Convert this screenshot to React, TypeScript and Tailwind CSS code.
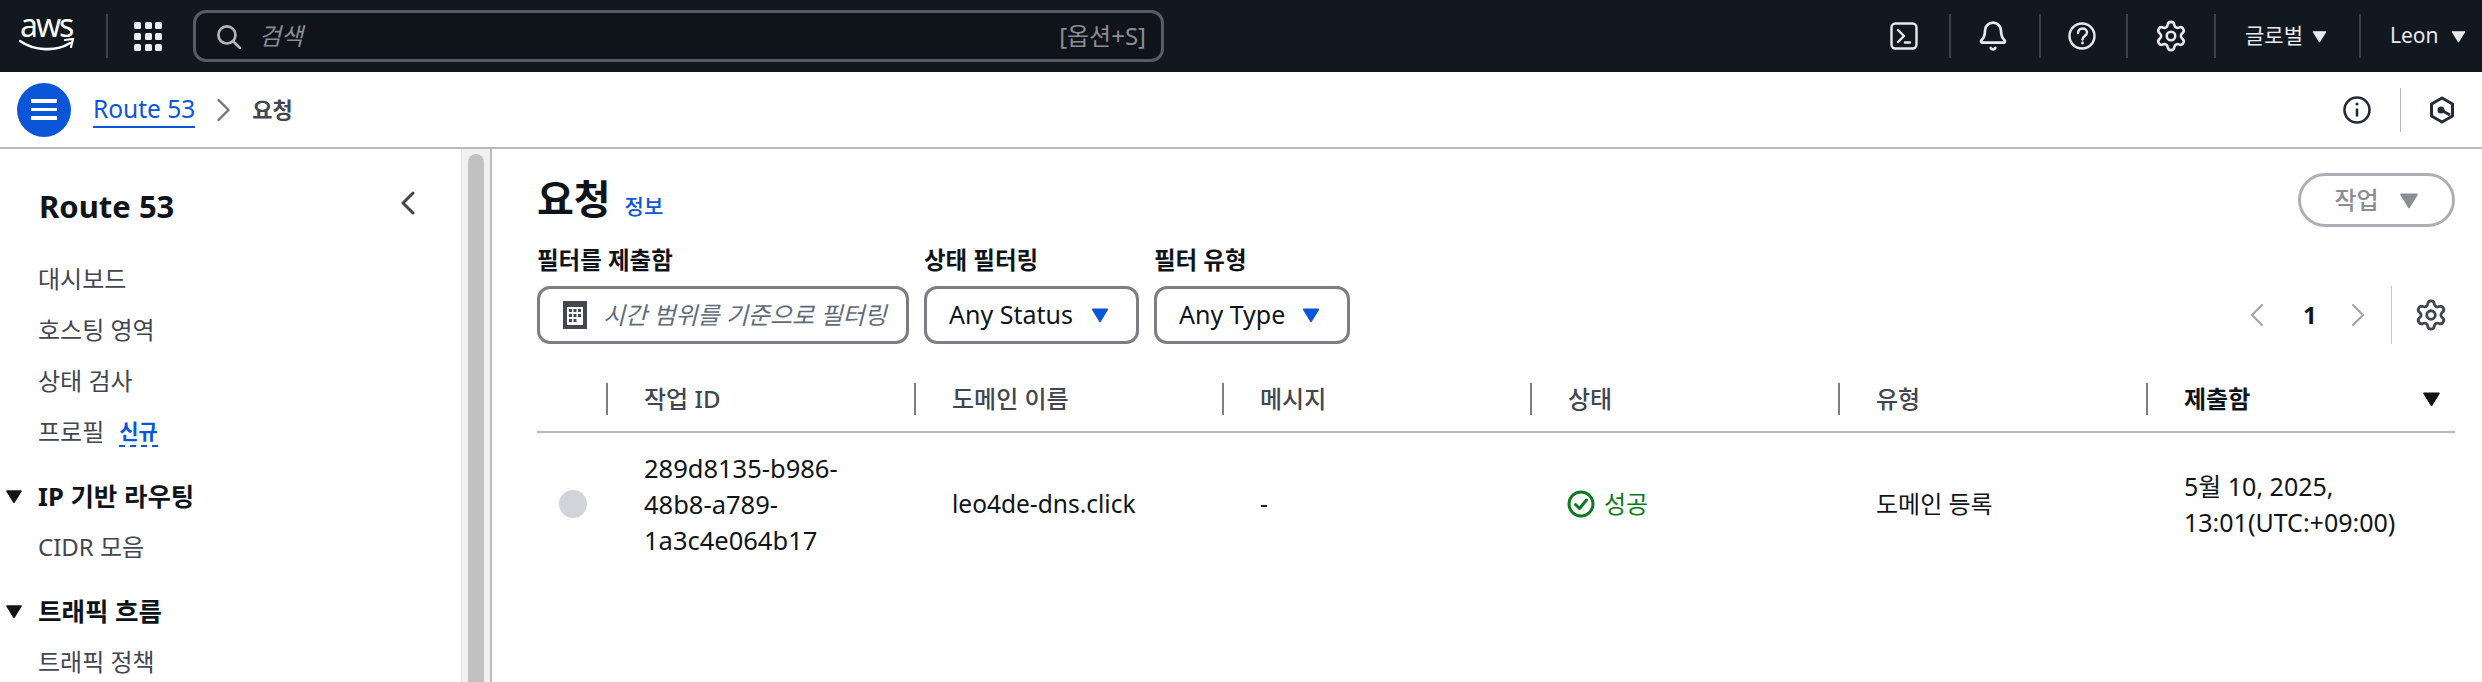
import { Settings, Bell } from "lucide-react";

const Caret = ({ className }: { className: string }) => (
  <svg viewBox="0 0 16 14" className={className}>
    <path d="M1.5 2h13L8 12.5z" fill="currentColor" stroke="currentColor" strokeWidth="1.5" strokeLinejoin="round" />
  </svg>
);

const Chev = ({ dir, className, width = 2.6 }: { dir: "left" | "right"; className: string; width?: number }) => (
  <svg viewBox="0 0 14 24" className={className} fill="none" stroke="currentColor" strokeWidth={width} strokeLinecap="round" strokeLinejoin="round">
    <path d={dir === "right" ? "M2 2l10 10-10 10" : "M12 2L2 12l10 10"} />
  </svg>
);

const Sep = () => <div className="w-[2px] h-[44px] bg-[#3a414c] shrink-0" />;

function TopBar() {
  return (
    <header className="h-[72px] bg-[#121820] flex items-center text-[#e9e9ee] shrink-0">
      <div className="w-[106px] shrink-0 pl-[20px] relative h-full">
        <div className="text-[32px] leading-[32px] pt-[9px] tracking-[-2px] text-white">aws</div>
        <svg viewBox="0 0 56 14" className="absolute left-[19px] top-[38px] w-[56px] h-[14px]">
          <path d="M1 3c14 10 36 11 50 2" fill="none" stroke="#fff" strokeWidth="2.6" strokeLinecap="round" />
          <path d="M46 2l8-1-2 8" fill="none" stroke="#fff" strokeWidth="2.2" strokeLinecap="round" />
        </svg>
      </div>
      <Sep />
      <div className="w-[28px] ml-[26px] grid grid-cols-3 gap-[4px] shrink-0">
        {Array.from({ length: 9 }).map((_, i) => (
          <span key={i} className="w-[7px] h-[7px] rounded-[1.5px] bg-[#eeeef2]" />
        ))}
      </div>
      <div className="ml-[31px] w-[971px] h-[52px] rounded-[13px] border-[3px] border-[#565b64] bg-[#0f141a] flex items-center pl-[20px] pr-[15px]">
        <svg viewBox="0 0 24 24" className="w-[25px] h-[25px] text-[#b4b4bb] shrink-0" fill="none" stroke="currentColor" strokeWidth="2.6">
          <circle cx="10.5" cy="10.5" r="8.2" />
          <path d="M16.5 16.5l6.5 6.500" strokeLinecap="round" />
        </svg>
        <span className="ml-[18px] italic text-[24px] text-[#8c8c94]">검색</span>
        <span className="ml-auto text-[24px] text-[#8c8c94]">[옵션+S]</span>
      </div>
      <div className="ml-auto flex items-center h-[44px]">
        <svg viewBox="0 0 28 28" className="w-[28px] h-[28px]" fill="none" stroke="currentColor" strokeWidth="2.4">
          <rect x="1.5" y="1.5" width="25" height="25" rx="4" />
          <path d="M8 8l6 6-6 6M15 20.5h5" strokeLinecap="round" strokeLinejoin="round" />
        </svg>
        <div className="w-[2px] h-[44px] bg-[#3a414c] ml-[31px]" />
        <Bell className="w-[32px] h-[32px] ml-[26px]" strokeWidth={2} />
        <div className="w-[2px] h-[44px] bg-[#3a414c] ml-[30px]" />
        <svg viewBox="0 0 28 28" className="w-[28px] h-[28px] ml-[27px]" fill="none" stroke="currentColor" strokeWidth="2.4">
          <circle cx="14" cy="14" r="12.5" />
          <path d="M10 11c0-6 9-6 9-.5 0 3.500-4.500 3.500-4.500 7" strokeLinecap="round" />
          <circle cx="14.500" cy="21" r="1.400" fill="currentColor" stroke="none" />
        </svg>
        <div className="w-[2px] h-[44px] bg-[#3a414c] ml-[30px]" />
        <Settings className="w-[34px] h-[34px] ml-[26px]" strokeWidth={1.8} />
        <div className="w-[2px] h-[44px] bg-[#3a414c] ml-[26px]" />
        <span className="text-[21px] ml-[29px] w-[55px] whitespace-nowrap">글로벌</span>
        <Caret className="w-[15px] h-[13px] ml-[12px]" />
        <div className="w-[2px] h-[44px] bg-[#3a414c] ml-[32px]" />
        <span className="text-[21px] ml-[29px] w-[49px] whitespace-nowrap">Leon</span>
        <Caret className="w-[15px] h-[13px] ml-[12px] mr-[16px]" />
      </div>
    </header>
  );
}

function SubBar() {
  return (
    <div className="h-[77px] border-b-2 border-[#b8b8c0] flex items-center shrink-0 bg-white">
      <button className="ml-[17px] w-[54px] h-[54px] rounded-full bg-[#0b55d8] flex flex-col items-center justify-center gap-[5px]">
        <span className="w-[26px] h-[3.500px] bg-white" />
        <span className="w-[26px] h-[3.500px] bg-white" />
        <span className="w-[26px] h-[3.500px] bg-white" />
      </button>
      <a className="ml-[22px] text-[24.500px] leading-[34px] text-[#0b55d8] border-b-2 border-[#0b55d8]">Route 53</a>
      <Chev dir="right" className="w-[15px] h-[24px] ml-[21px] text-[#6f7680]" width={2.4} />
      <span className="ml-[21px] text-[22px] font-bold text-[#424650]">요청</span>
      <div className="ml-auto flex items-center">
        <svg viewBox="0 0 28 28" className="w-[28px] h-[28px] text-[#232b37]" fill="none" stroke="currentColor" strokeWidth="2.6">
          <circle cx="14" cy="14" r="12.500" />
          <path d="M14 12.500v8" />
          <circle cx="14" cy="8" r="1.600" fill="currentColor" stroke="none" />
        </svg>
        <div className="w-px h-[44px] bg-[#b8b8c0] ml-[29px]" />
        <svg viewBox="0 0 26 28" className="w-[26px] h-[28px] ml-[28px] mr-[27px] text-[#232b37]" fill="none" stroke="currentColor" strokeWidth="3">
          <path d="M13 2l10.500 6v12L13 26 2.500 20V8z" strokeLinejoin="round" />
          <circle cx="12" cy="14" r="3.500" fill="currentColor" stroke="none" />
          <path d="M12 14l9 5" />
        </svg>
      </div>
    </div>
  );
}

function Sidebar() {
  const item = "text-[24px] leading-[30px] text-[#424650] pl-[38px]";
  const group = "flex items-center text-[25.500px] leading-[32px] font-bold text-[#0f141a]";
  return (
    <aside className="w-[461px] shrink-0 bg-white">
      <div className="pl-[39px] pr-[46px] pt-[39px] flex items-center justify-between">
        <span className="text-[31px] leading-[36px] font-bold text-[#0f141a]">Route 53</span>
        <Chev dir="left" className="w-[14px] h-[24px] -mt-[6px] text-[#424650]" width={3} />
      </div>
      <nav className="pt-[40px] flex flex-col">
        <div className={item}>대시보드</div>
        <div className={`${item} mt-[21px]`}>호스팅 영역</div>
        <div className={`${item} mt-[21px]`}>상태 검사</div>
        <div className={`${item} mt-[21px] flex items-center`}>
          프로필
          <span className="ml-[15px] text-[21px] leading-[28px] font-bold text-[#0b55d8] border-b-2 border-dashed border-[#0b55d8]">신규</span>
        </div>
        <div className={`${group} mt-[33px]`}>
          <Caret className="w-[18px] h-[15px] ml-[5px] mr-[15px] text-[#0f141a]" />
          IP 기반 라우팅
        </div>
        <div className={`${item} mt-[20px]`}>CIDR 모음</div>
        <div className={`${group} mt-[33px]`}>
          <Caret className="w-[18px] h-[15px] ml-[5px] mr-[15px] text-[#0f141a]" />
          트래픽 흐름
        </div>
        <div className={`${item} mt-[20px]`}>트래픽 정책</div>
      </nav>
    </aside>
  );
}

function Scrollbar() {
  return (
    <div className="w-[31px] shrink-0 bg-[#f1f1f1] border-l border-[#e4e4e4] border-r-2 border-r-[#b8b8c0] px-[6px] pt-[5px]">
      <div className="w-[16px] h-[600px] rounded-full bg-[#c1c1c1]" />
    </div>
  );
}

function SelectBox({ label, width }: { label: string; width: string }) {
  return (
    <div className={`${width} h-[58px] rounded-[13px] border-[3px] border-[#7d7d86] flex items-center justify-between pl-[22px] pr-[27px] text-[25px] text-[#0f141a]`}>
      {label}
      <Caret className="w-[18px] h-[16px] text-[#0b55d8]" />
    </div>
  );
}

function FilterLabel({ children }: { children: string }) {
  return <div className="text-[23.500px] leading-[30px] font-bold text-[#0f141a] mb-[11px]">{children}</div>;
}

const columns = ["작업 ID", "도메인 이름", "메시지", "상태", "유형"];

function Table() {
  return (
    <div className="mt-[39px]">
      <div className="grid grid-cols-[69px_308px_308px_308px_308px_308px_310px] items-start border-b-2 border-[#b8b8c0] pb-[16px]">
        <div />
        {columns.map((c) => (
          <div key={c} className="border-l-2 border-[#7d7d86] h-[32px] pl-[36px] text-[24px] leading-[32px] font-medium text-[#424650]">{c}</div>
        ))}
        <div className="border-l-2 border-[#7d7d86] h-[32px] pl-[36px] pr-[15px] flex items-center justify-between text-[24px] leading-[32px] font-bold text-[#0f141a]">
          제출함
          <Caret className="w-[19px] h-[16px] text-[#0f141a]" />
        </div>
      </div>
      <div className="grid grid-cols-[69px_308px_308px_308px_308px_308px_310px] items-center text-[24.500px] leading-[36px] text-[#0f141a] pt-[17px]">
        <div className="pl-[22px]">
          <div className="w-[28px] h-[28px] rounded-full bg-[#d1d5db]" />
        </div>
        <div className="pl-[38px] text-[25.500px] whitespace-nowrap">
          289d8135-b986-
          <br />
          48b8-a789-
          <br />
          1a3c4e064b17
        </div>
        <div className="pl-[38px]">leo4de-dns.click</div>
        <div className="pl-[38px]">-</div>
        <div className="pl-[37px] flex items-center text-[#0a7a20] text-[24px]">
          <svg viewBox="0 0 28 28" className="w-[28px] h-[28px] mr-[9px]" fill="none" stroke="currentColor" strokeWidth="3">
            <circle cx="14" cy="14" r="12" />
            <path d="M8.500 14.500l4 4 7-8.500" strokeLinecap="round" strokeLinejoin="round" />
          </svg>
          성공
        </div>
        <div className="pl-[38px] text-[24px]">도메인 등록</div>
        <div className="pl-[38px] whitespace-nowrap text-[25px]">
          5월 10, 2025,
          <br />
          13:01(UTC:+09:00)
        </div>
      </div>
    </div>
  );
}

function Main() {
  return (
    <main className="flex-1 min-w-0 pl-[45px] pr-[27px] bg-white">
      <div className="flex justify-between pt-[24px] h-[96px]">
        <div className="flex items-baseline">
          <h1 className="text-[40px] leading-[52px] font-bold text-[#0f141a]">요청</h1>
          <a className="ml-[14px] text-[21px] text-[#0b55d8] font-medium">정보</a>
        </div>
        <button className="w-[157px] h-[54px] rounded-full border-[3px] border-[#aeaeb6] flex items-center justify-center gap-[20px] text-[24px] font-medium text-[#8c8c94]">
          작업
          <Caret className="w-[20px] h-[17px] text-[#8c8c94]" />
        </button>
      </div>
      <div className="flex items-end">
        <div className="w-[372px] mr-[15px]">
          <FilterLabel>필터를 제출함</FilterLabel>
          <div className="h-[58px] rounded-[13px] border-[3px] border-[#7d7d86] flex items-center pl-[23px] text-[24px] italic text-[#5f6b7a] whitespace-nowrap">
            <svg viewBox="0 0 24 28" className="w-[24px] h-[28px] mr-[16px] text-[#424650] shrink-0">
              <path d="M0 0h24v28H0z M4 6v18h16V6z" fill="currentColor" fillRule="evenodd" />
              <path d="M6 8h3v3H6zM10.500 8h3v3h-3zM15 8h3v3h-3zM6 13h3v3H6zM10.500 13h3v3h-3zM15 13h3v3h-3zM6 18h3v3H6zM10.500 18h3v3h-3z" fill="currentColor" />
            </svg>
            시간 범위를 기준으로 필터링
          </div>
        </div>
        <div className="mr-[15px]">
          <FilterLabel>상태 필터링</FilterLabel>
          <SelectBox label="Any Status" width="w-[215px]" />
        </div>
        <div>
          <FilterLabel>필터 유형</FilterLabel>
          <SelectBox label="Any Type" width="w-[196px]" />
        </div>
        <div className="ml-auto h-[58px] flex items-center pr-[7px]">
          <Chev dir="left" className="w-[14px] h-[24px] text-[#a4a4ac]" width={2.2} />
          <span className="ml-[39px] w-[12px] text-[24px] font-bold text-[#0f141a]">1</span>
          <Chev dir="right" className="ml-[36px] w-[14px] h-[24px] text-[#a4a4ac]" width={2.2} />
          <div className="ml-[26px] w-px h-[58px] bg-[#c6c6cd]" />
          <Settings className="ml-[22px] w-[34px] h-[34px] text-[#424650]" strokeWidth={2} />
        </div>
      </div>
      <Table />
    </main>
  );
}

export default function App() {
  return (
    <div className="w-[2482px] h-[682px] overflow-hidden flex flex-col bg-white [font-family:'Noto_Sans','Noto_Sans_CJK_KR',sans-serif]">
      <TopBar />
      <SubBar />
      <div className="flex flex-1 min-h-0">
        <Sidebar />
        <Scrollbar />
        <Main />
      </div>
    </div>
  );
}
